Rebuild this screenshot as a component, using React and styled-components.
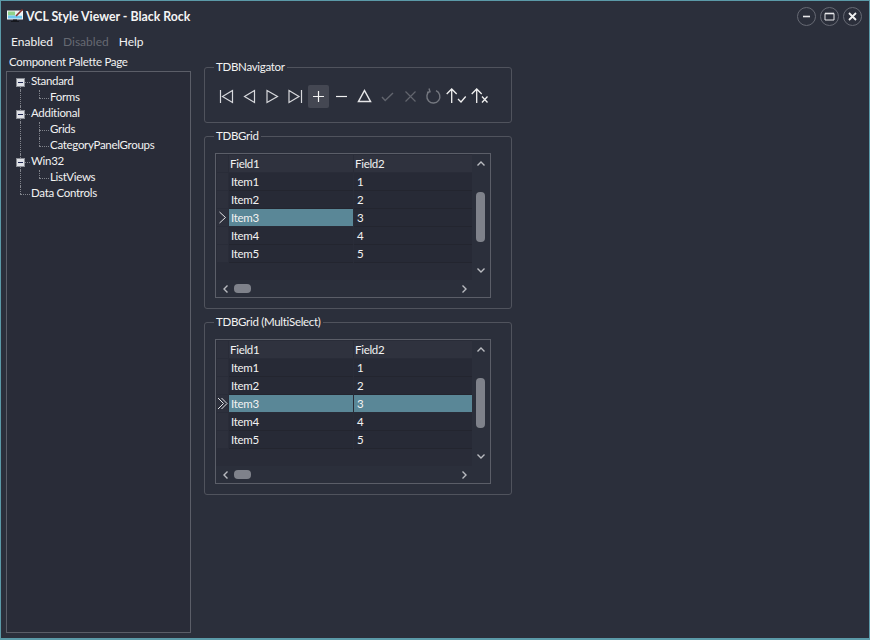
import React from 'react';
import styled, { createGlobalStyle } from 'styled-components';

const GlobalStyle = createGlobalStyle`
  html, body {
    margin: 0;
    padding: 0;
    background: #2b2f3b;
  }
  * {
    box-sizing: border-box;
  }
`;

const Window = styled.div`
  width: 870px;
  height: 640px;
  display: flex;
  flex-direction: column;
  background: #2b2f3b;
  border: 1px solid #5b9aa8;
  border-bottom-width: 2px;
  color: #f2f2f2;
  font-family: Lato, 'Noto Sans', sans-serif;
  font-size: 11.5px;
  letter-spacing: -0.3px;
  overflow: hidden;
`;

const TitleBar = styled.div`
  height: 30px;
  display: flex;
  align-items: center;
  padding: 0 7px 0 6px;
`;

const Title = styled.div`
  flex: 1;
  margin-left: 2px;
  font-weight: 700;
  font-size: 12.3px;
  letter-spacing: 0;
  color: #f4f4f4;
`;

const WinButtons = styled.div`
  display: flex;
  gap: 4px;
`;

const WinButton = styled.div`
  width: 19px;
  height: 19px;
  border: 1px solid #666973;
  border-radius: 50%;
  display: flex;
  align-items: center;
  justify-content: center;
`;

const MenuBar = styled.div`
  height: 20px;
  display: flex;
  align-items: center;
  padding-left: 10px;
  gap: 10px;
  font-size: 12px;
  letter-spacing: 0;
`;

const MenuItem = styled.span`
  color: ${(p) => (p.$disabled ? '#666972' : '#f2f2f2')};
`;

const Body = styled.div`
  flex: 1;
  display: flex;
  min-height: 0;
  padding: 5px 5px 5px;
  gap: 13px;
`;

const LeftColumn = styled.div`
  width: 185px;
  display: flex;
  flex-direction: column;
`;

const PanelLabel = styled.div`
  height: 11px;
  line-height: 11px;
  padding-left: 3px;
  white-space: nowrap;
`;

const TreeBox = styled.div`
  flex: 1;
  margin-top: 4px;
  background: #292c38;
  border: 1px solid #5b5e68;
  padding: 2px 0 0 4px;
`;

const TreeRow = styled.div`
  height: 16px;
  display: flex;
  align-items: stretch;
`;

const Guide = styled.div`
  position: relative;
  width: 19px;
  flex: none;
  display: flex;
  align-items: center;
  justify-content: center;

  &::before {
    content: '';
    display: ${(p) => (p.$top || p.$bottom ? 'block' : 'none')};
    position: absolute;
    left: 9px;
    top: ${(p) => (p.$top ? '0' : '8px')};
    bottom: ${(p) => (p.$bottom ? '0' : '8px')};
    border-left: 1px dotted #80838b;
  }

  &::after {
    content: '';
    display: ${(p) => (p.$right ? 'block' : 'none')};
    position: absolute;
    left: 9px;
    right: 0;
    top: 8px;
    border-top: 1px dotted #80838b;
  }
`;

const Expander = styled.span`
  position: relative;
  z-index: 1;
  width: 9px;
  height: 9px;
  background: #dfe1e6;
  border: 1px solid #8b8e96;
  display: flex;
  align-items: center;
  justify-content: center;

  &::before {
    content: '';
    width: 5px;
    height: 1px;
    background: #1c2450;
  }
`;

const TreeLabel = styled.span`
  margin-left: 1px;
  line-height: 14px;
  white-space: nowrap;
`;

const RightColumn = styled.div`
  width: 308px;
  margin-top: 4px;
  display: flex;
  flex-direction: column;
  gap: 6px;
`;

const Group = styled.fieldset`
  margin: 0;
  min-width: 0;
  width: 308px;
  border: 1px solid #50535d;
  border-radius: 3px;
  padding: ${(p) => p.$padding};
`;

const Legend = styled.legend`
  margin-left: -1px;
  padding: 0 2px;
  line-height: 14px;
  height: 14px;
`;

const Navigator = styled.div`
  display: flex;
`;

const NavButton = styled.div`
  width: 21px;
  height: 23px;
  margin: 0 1px;
  border-radius: 2px;
  background: ${(p) => (p.$hot ? '#444752' : 'transparent')};
  display: flex;
  align-items: center;
  justify-content: center;
`;

const GridBox = styled.div`
  width: 276px;
  height: 145px;
  border: 1px solid #5b5e68;
  background: #292c38;
  display: grid;
  grid-template-columns: 1fr 18px;
  grid-template-rows: 1fr 17px;
`;

const Table = styled.div`
  padding: 1px 0 0 1px;
  display: flex;
  flex-direction: column;
`;

const Row = styled.div`
  height: 18px;
  display: grid;
  grid-template-columns: 12px 125px 118px;
  flex: none;
`;

const Indicator = styled.div`
  margin-right: 1px;
  margin-bottom: 1px;
  background: #2d303c;
  display: flex;
  align-items: center;
  justify-content: center;
`;

const Cell = styled.div`
  margin-right: 1px;
  padding-left: ${(p) => p.$indent}px;
  line-height: 18px;
  height: 17px;
  background: ${(p) => {
    if (p.$selected) return '#5a8797';
    return p.$header ? '#2f323e' : '#272a36';
  }};
  box-shadow: ${(p) => (p.$selected || p.$header ? 'none' : '0 1px 0 #23252f')};

  &:last-child {
    margin-right: 0;
  }
`;

const VScroll = styled.div`
  background: #2b2f3b;
  display: flex;
  flex-direction: column;
  align-items: center;
  padding: 5px 1px 0 0;
`;

const VThumb = styled.div`
  width: 9px;
  height: 50px;
  margin: 23px 0 23px;
  background: #7f828b;
  border-radius: 4px;
`;

const HScroll = styled.div`
  background: #2b2f3b;
  display: flex;
  align-items: center;
  padding-left: 5px;
`;

const HThumb = styled.div`
  width: 17px;
  height: 9px;
  margin: 0 208px 0 3px;
  background: #7f828b;
  border-radius: 4px;
`;

const Corner = styled.div`
  background: #2b2f3b;
`;

const Stroke = styled.svg`
  display: block;
  flex: none;
  fill: none;
  stroke: ${(p) => p.$color || '#d8d9dd'};
  stroke-width: ${(p) => p.$width || 1.2};
`;

const navIcons = [
  { d: 'M5.5 5v13M17.5 5.5l-10 6 10 6z' },
  { d: 'M16.5 5.5l-10 6 10 6z' },
  { d: 'M6 5.5l10.5 6-10.5 6z' },
  { d: 'M5 5.5l10 6-10 6zM17.5 5v13' },
  { d: 'M11.5 6v11M6 11.5h11', color: '#f4f4f4', hot: true },
  { d: 'M6 11.5h11', color: '#f0f0f0' },
  { d: 'M11.5 5.5l6 11h-12z', color: '#e6e6e8', width: 1.5 },
  { d: 'M6 12l3.2 3.5L17 8', color: '#62656e', width: 1.4 },
  { d: 'M6.5 6.5l10 10M16.5 6.5l-10 10', color: '#62656e' },
  { d: 'M14 5.6A6.5 6.5 0 1 1 8 6M7 3.5l1 3.2-3 .8', color: '#74777f', width: 1.4 },
  { d: 'M6.7 18V4M1.7 9l5-5 5 5M13 14l3 3 4.7-5.5', color: '#f0f0f0', width: 1.3 },
  { d: 'M8.7 18V4M3.7 9l5-5 5 5M14 11.5l5.5 6M19.5 11.5l-5.5 6', color: '#f0f0f0', width: 1.3 },
];

const Chevron = ({ dir }) => {
  const paths = {
    up: 'M1.5 6.5L5 3l3.5 3.5',
    down: 'M1.5 3.5L5 7l3.5-3.5',
    left: 'M6.5 1.5L3 5l3.5 3.5',
    right: 'M3.5 1.5L7 5 3.5 8.5',
  };
  return (
    <Stroke width="10" height="10" viewBox="0 0 10 10" $color="#b9bbc0" $width={1.4}>
      <path d={paths[dir]} />
    </Stroke>
  );
};

const Pointer = ({ double }) => (
  <Stroke width="11" height="13" viewBox="0 0 11 13" $color="#e4e5e8" $width={1}>
    <path d={double ? 'M1 1l5.5 5.5L1 12M4.5 1L10 6.5 4.5 12' : 'M2.5 1L8.5 6.5 2.5 12'} />
  </Stroke>
);

const AppIcon = () => (
  <svg width="17" height="14" viewBox="0 0 17 14">
    <rect x="0" y="1.5" width="16" height="9" fill="#f4f6f8" />
    <rect x="1" y="2.5" width="7" height="4" fill="#8fd28a" />
    <rect x="1" y="6.5" width="14" height="3" fill="#6ec6ee" />
    <rect x="8" y="2.5" width="7" height="4" fill="#e8f1f4" />
    <path d="M9 7L15.5 0.5" stroke="#8a2f2a" strokeWidth="1.6" />
    <rect x="6" y="10.5" width="4" height="1.5" fill="#15171d" />
    <rect x="4" y="12" width="8" height="1" fill="#15171d" />
  </svg>
);

const items = ['Item1', 'Item2', 'Item3', 'Item4', 'Item5'];

const DataGrid = ({ multi }) => (
  <GridBox>
    <Table>
      <Row>
        <Indicator />
        <Cell $header $indent={1}>Field1</Cell>
        <Cell $header $indent={1}>Field2</Cell>
      </Row>
      {items.map((item, i) => {
        const current = i === 2;
        return (
          <Row key={item}>
            <Indicator>{current && <Pointer double={multi} />}</Indicator>
            <Cell $selected={current} $indent={2}>{item}</Cell>
            <Cell $selected={current && multi} $indent={3}>{i + 1}</Cell>
          </Row>
        );
      })}
    </Table>
    <VScroll>
      <Chevron dir="up" />
      <VThumb />
      <Chevron dir="down" />
    </VScroll>
    <HScroll>
      <Chevron dir="left" />
      <HThumb />
      <Chevron dir="right" />
    </HScroll>
    <Corner />
  </GridBox>
);

const tree = [
  { label: 'Standard', open: true, level: 0 },
  { label: 'Forms', level: 1 },
  { label: 'Additional', open: true, level: 0 },
  { label: 'Grids', level: 1, more: true },
  { label: 'CategoryPanelGroups', level: 1 },
  { label: 'Win32', open: true, level: 0 },
  { label: 'ListViews', level: 1 },
  { label: 'Data Controls', level: 0, last: true },
];

const TreeItem = ({ node, first }) => (
  <TreeRow>
    {node.level === 0 ? (
      <Guide $top={!first} $bottom={!node.last} $right>
        {node.open && <Expander />}
      </Guide>
    ) : (
      <>
        <Guide $top $bottom />
        <Guide $top $bottom={node.more} $right />
      </>
    )}
    <TreeLabel>{node.label}</TreeLabel>
  </TreeRow>
);

export default function App() {
  return (
    <Window>
      <GlobalStyle />
      <TitleBar>
        <AppIcon />
        <Title>VCL Style Viewer - Black Rock</Title>
        <WinButtons>
          <WinButton>
            <svg width="9" height="9" viewBox="0 0 9 9"><path d="M1 4.5h7" stroke="#e8e8ea" strokeWidth="1.6" /></svg>
          </WinButton>
          <WinButton>
            <svg width="11" height="9" viewBox="0 0 11 9" fill="none"><path d="M1 1.5h9v6.5H1z" stroke="#e8e8ea" /><path d="M1 1.5h9" stroke="#e8e8ea" strokeWidth="1.6" /></svg>
          </WinButton>
          <WinButton>
            <svg width="9" height="9" viewBox="0 0 9 9"><path d="M1 1l7 7M8 1L1 8" stroke="#f0f0f0" strokeWidth="1.8" /></svg>
          </WinButton>
        </WinButtons>
      </TitleBar>
      <MenuBar>
        <MenuItem>Enabled</MenuItem>
        <MenuItem $disabled>Disabled</MenuItem>
        <MenuItem>Help</MenuItem>
      </MenuBar>
      <Body>
        <LeftColumn>
          <PanelLabel>Component Palette Page</PanelLabel>
          <TreeBox>
            {tree.map((node, i) => (
              <TreeItem key={node.label} node={node} first={i === 0} />
            ))}
          </TreeBox>
        </LeftColumn>
        <RightColumn>
          <Group $padding="11px 0 14px 10px">
            <Legend>TDBNavigator</Legend>
            <Navigator>
              {navIcons.map((icon) => (
                <NavButton key={icon.d} $hot={icon.hot}>
                  <Stroke width="23" height="23" viewBox="0 0 23 23" $color={icon.color} $width={icon.width}>
                    <path d={icon.d} />
                  </Stroke>
                </NavButton>
              ))}
            </Navigator>
          </Group>
          <Group $padding="10px 0 10px 10px">
            <Legend>TDBGrid</Legend>
            <DataGrid />
          </Group>
          <Group $padding="10px 0 10px 10px">
            <Legend>TDBGrid (MultiSelect)</Legend>
            <DataGrid multi />
          </Group>
        </RightColumn>
      </Body>
    </Window>
  );
}
